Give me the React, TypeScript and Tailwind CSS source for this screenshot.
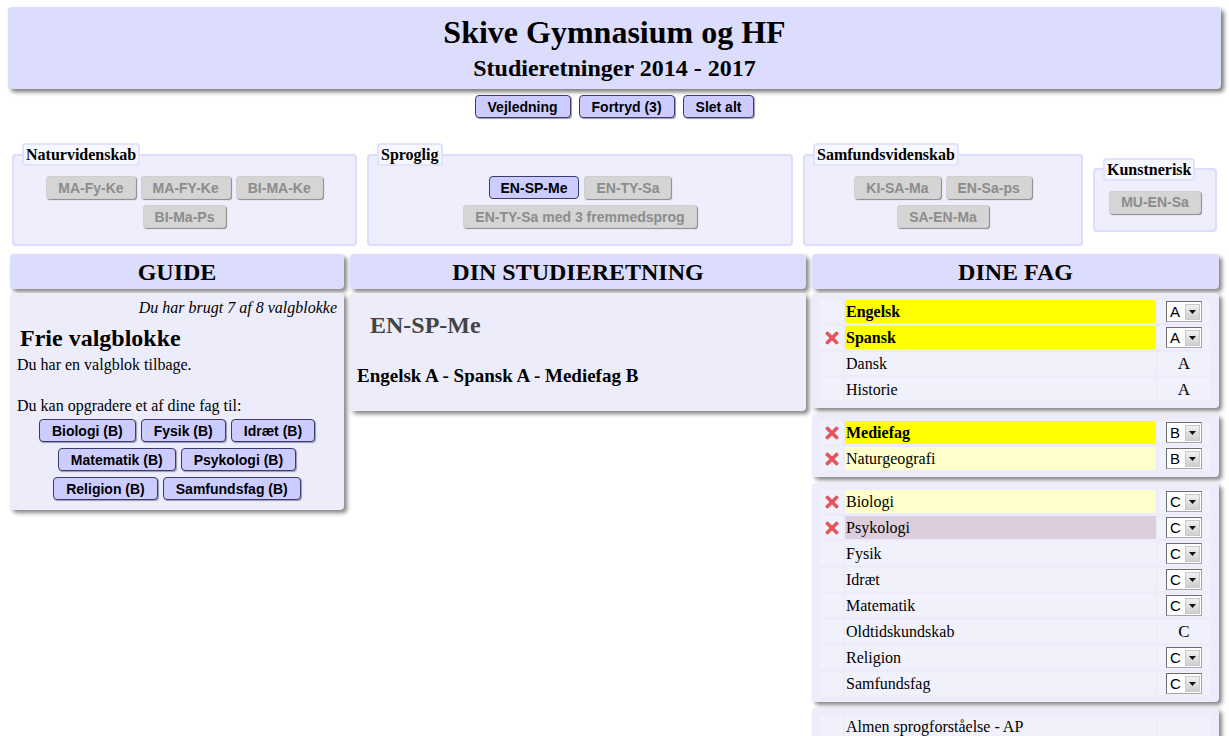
import React from 'react';

type Row = {
  name: string;
  remove?: boolean;
  tone?: 'yellow' | 'light' | 'mauve';
  bold?: boolean;
  grade?: string;
  select?: boolean;
};

const groups = [
  { title: 'Naturvidenskab', width: 'w-[345px]', items: ['MA-Fy-Ke', 'MA-FY-Ke', 'BI-MA-Ke', 'BI-Ma-Ps'] },
  { title: 'Sproglig', width: 'w-[426px]', items: ['EN-SP-Me', 'EN-TY-Sa', 'EN-TY-Sa med 3 fremmedsprog'] },
  { title: 'Samfundsvidenskab', width: 'w-[280px]', items: ['KI-SA-Ma', 'EN-Sa-ps', 'SA-EN-Ma'] },
  { title: 'Kunstnerisk', width: 'w-[124px]', items: ['MU-EN-Sa'] },
];

// rows in "dine fag", one array per box
const fagBoxes: Row[][] = [
  [
    { name: 'Engelsk', tone: 'yellow', bold: true, grade: 'A', select: true },
    { name: 'Spansk', remove: true, tone: 'yellow', bold: true, grade: 'A', select: true },
    { name: 'Dansk', grade: 'A' },
    { name: 'Historie', grade: 'A' },
  ],
  [
    { name: 'Mediefag', remove: true, tone: 'yellow', bold: true, grade: 'B', select: true },
    { name: 'Naturgeografi', remove: true, tone: 'light', grade: 'B', select: true },
  ],
  [
    { name: 'Biologi', remove: true, tone: 'light', grade: 'C', select: true },
    { name: 'Psykologi', remove: true, tone: 'mauve', grade: 'C', select: true },
    { name: 'Fysik', grade: 'C', select: true },
    { name: 'Idræt', grade: 'C', select: true },
    { name: 'Matematik', grade: 'C', select: true },
    { name: 'Oldtidskundskab', grade: 'C' },
    { name: 'Religion', grade: 'C', select: true },
    { name: 'Samfundsfag', grade: 'C', select: true },
  ],
  [{ name: 'Almen sprogforståelse - AP' }],
];

const upgrades = [
  ['Biologi (B)', 'Fysik (B)', 'Idræt (B)'],
  ['Matematik (B)', 'Psykologi (B)'],
  ['Religion (B)', 'Samfundsfag (B)'],
];

const toneBg = {
  yellow: 'bg-[#ffff00]',
  light: 'bg-[#ffffcc]',
  mauve: 'bg-[#dccedc]',
};

const BlueButton = ({ label }: { label: string }) => (
  <button className="h-[23px] px-[12px] rounded-[4px] border border-[#3b3b6e] bg-[#ccccff] shadow-[1px_1px_1px_#9a9ab0] font-['Liberation_Sans',sans-serif] text-[14px] font-bold leading-none text-black">
    {label}
  </button>
);

const GreyButton = ({ label, active }: { label: string; active?: boolean }) =>
  active ? (
    <button className="h-[23px] px-[11px] rounded-[4px] border border-[#3b3b6e] bg-[#ccccff] font-['Liberation_Sans',sans-serif] text-[14px] font-bold leading-none text-black">
      {label}
    </button>
  ) : (
    <button className="h-[23px] px-[11px] rounded-[3px] border border-[#cfcfcf] bg-[#d5d5d5] shadow-[1px_1px_1px_#8a8a8a] font-['Liberation_Sans',sans-serif] text-[14px] font-bold leading-none text-[#8c8c8c]">
      {label}
    </button>
  );

const RemoveIcon = () => (
  <svg width="14" height="14" viewBox="0 0 14 14">
    <path d="M2.4 2.4 L11.6 11.6 M11.6 2.4 L2.4 11.6" stroke="#e5535b" strokeWidth="3.6" strokeLinecap="round" />
  </svg>
);

const GradeSelect = ({ value }: { value: string }) => (
  <div className="flex h-[21px] w-[36px] items-center border border-[#a5a5a5] border-t-[#6d6d6d] border-l-[#6d6d6d] bg-white font-['Liberation_Sans',sans-serif]">
    <span className="flex-1 pl-[3px] text-[15px] leading-none">{value}</span>
    <span className="mr-[1px] flex h-[16px] w-[15px] items-center justify-center border border-[#c9c9c9] bg-gradient-to-b from-[#f0f0f0] to-[#cfcfcf]">
      <svg width="7" height="4" viewBox="0 0 7 4">
        <path d="M0 0 H7 L3.5 4 Z" fill="#111" />
      </svg>
    </span>
  </div>
);

const ColumnHeader = ({ title }: { title: string }) => (
  <div className="flex h-[35px] items-center justify-center rounded-[4px] bg-[#dcdcfc] shadow-[3px_3px_4px_#858585] text-[24px] font-bold">
    {title}
  </div>
);

export default function App() {
  return (
    <div className="min-h-screen bg-white font-['Liberation_Serif',serif] text-black">
      {/* Top banner */}
      <div className="px-2 pt-[7px]">
        <div className="flex h-[82px] flex-col items-center justify-center rounded-[4px] bg-[#dcdcfc] shadow-[3px_3px_4px_#7a7a7a]">
          <h1 className="text-[32px] font-bold leading-[36px]">Skive Gymnasium og HF</h1>
          <h2 className="mt-[4px] text-[24px] font-bold leading-[28px]">Studieretninger 2014 - 2017</h2>
        </div>
      </div>

      <div className="mt-[6px] flex justify-center gap-2">
        <BlueButton label="Vejledning" />
        <BlueButton label="Fortryd (3)" />
        <BlueButton label="Slet alt" />
      </div>

      {/* Studieretning groups */}
      <div className="mt-[25px] flex items-center gap-[10px] pl-3">
        {groups.map((g) => (
          <fieldset
            key={g.title}
            className={`${g.width} rounded-[4px] border-2 border-[#dcdcfc] bg-[#eeeefd] px-2 pb-[16px] pt-[10px]`}
          >
            <legend className="rounded-[4px] border-2 border-[#e2e2fc] bg-[#f7f7ff] px-[2px] text-[16px] font-bold leading-[19px]">
              {g.title}
            </legend>
            <div className="flex flex-wrap justify-center gap-x-[5px] gap-y-[6px]">
              {g.items.map((it) => (
                <GreyButton key={it} label={it} active={it === 'EN-SP-Me'} />
              ))}
            </div>
          </fieldset>
        ))}
      </div>

      {/* Three columns */}
      <div className="mt-2 flex items-start gap-[6px] pl-[10px]">
        {/* Guide */}
        <div className="w-[334px]">
          <ColumnHeader title="GUIDE" />
          <div className="mt-1 rounded-[4px] bg-[#ececfb] pb-[10px] shadow-[3px_3px_4px_#858585]">
            <p className="pr-[7px] pt-[6px] text-right text-[16px] italic leading-[18px]">Du har brugt 7 af 8 valgblokke</p>
            <h3 className="mt-[8px] pl-[10px] text-[24px] font-bold leading-[27px]">Frie valgblokke</h3>
            <p className="mt-[3px] pl-[7px] text-[16px] leading-[19px]">Du har en valgblok tilbage.</p>
            <p className="mt-[22px] pl-[7px] text-[16px] leading-[19px]">Du kan opgradere et af dine fag til:</p>
            <div className="mt-[4px] flex flex-col gap-[6px]">
              {upgrades.map((row, i) => (
                <div key={i} className="flex justify-center gap-[5px]">
                  {row.map((b) => (
                    <BlueButton key={b} label={b} />
                  ))}
                </div>
              ))}
            </div>
          </div>
        </div>

        {/* Din studieretning */}
        <div className="w-[456px]">
          <ColumnHeader title="DIN STUDIERETNING" />
          <div className="mt-1 h-[118px] rounded-[4px] bg-[#ececfb] shadow-[3px_3px_4px_#858585]">
            <div className="pl-[20px] pt-[18px] text-[24px] font-bold leading-[28px] text-[#444]">EN-SP-Me</div>
            <div className="mt-[26px] pl-[7px] text-[19px] font-bold leading-[22px]">Engelsk A - Spansk A - Mediefag B</div>
          </div>
        </div>

        {/* Dine fag */}
        <div className="w-[407px]">
          <ColumnHeader title="DINE FAG" />
          <div className="mt-1 flex flex-col gap-[6px]">
            {fagBoxes.map((box, bi) => (
              <div key={bi} className="rounded-[4px] bg-[#ececfb] px-[8px] py-[7px] shadow-[3px_3px_4px_#858585]">
                <div className="grid grid-cols-[23px_311px_52px] gap-x-[2px] gap-y-[3px]">
                  {box.map((r) => (
                    <React.Fragment key={r.name}>
                      <div className="flex h-[23px] items-center justify-center bg-[#f1f1fc]">
                        {r.remove && <RemoveIcon />}
                      </div>
                      <div
                        className={`flex h-[23px] items-center pl-[1px] text-[16px] ${
                          r.tone ? toneBg[r.tone] : 'bg-[#f1f1fc]'
                        } ${r.bold ? 'font-bold' : ''}`}
                      >
                        {r.name}
                      </div>
                      <div className="flex h-[23px] items-center justify-center bg-[#f1f1fc] text-[17px]">
                        {r.grade && (r.select ? <GradeSelect value={r.grade} /> : r.grade)}
                      </div>
                    </React.Fragment>
                  ))}
                </div>
              </div>
            ))}
          </div>
        </div>
      </div>
    </div>
  );
}
